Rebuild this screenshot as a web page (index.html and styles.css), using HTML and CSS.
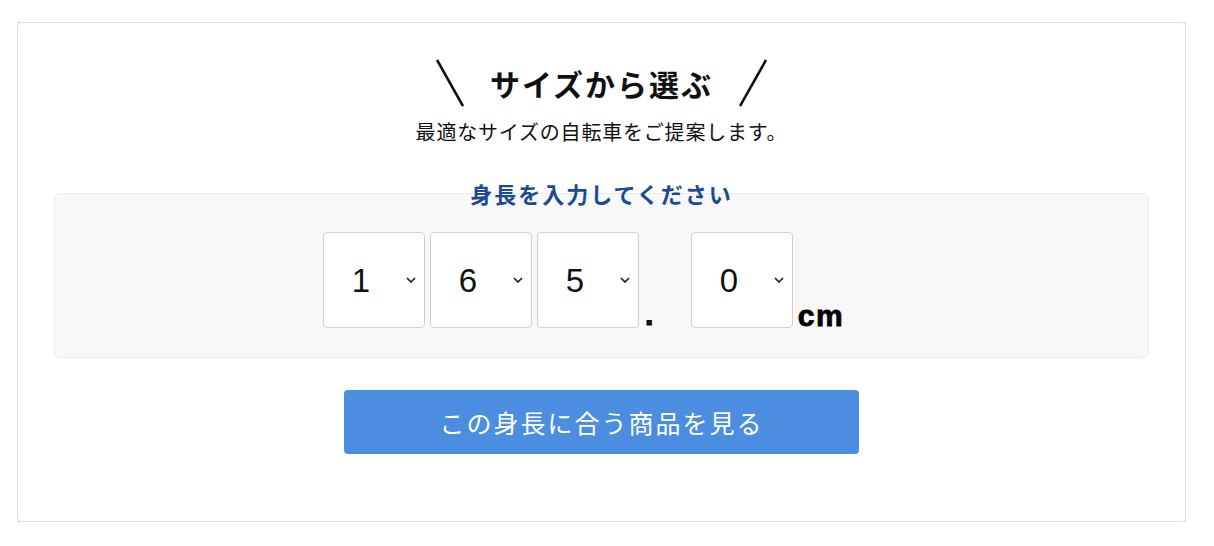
FILE: index.html
```html
<!DOCTYPE html>
<html lang="ja">
<head>
  <meta charset="UTF-8" />
  <title>サイズから選ぶ</title>
  <link rel="stylesheet" href="styles.css">
</head>
<body>
  <div class="card">
    <h2 class="title">
      <svg class="slash" width="28" height="48" viewBox="0 0 28 48"><line x1="1" y1="1" x2="27" y2="47" /></svg>
      <span>サイズから選ぶ</span>
      <svg class="slash" width="28" height="48" viewBox="0 0 28 48"><line x1="27" y1="1" x2="1" y2="47" /></svg>
    </h2>
    <p class="lead">最適なサイズの自転車をご提案します。</p>

    <div class="label">身長を入力してください</div>
    <div class="height-box">
      <div class="height-row">
        <div class="pick">
          <select><option>0</option><option selected>1</option><option>2</option></select>
          <svg class="chev" width="10" height="6" viewBox="0 0 10 6"><polyline points="1,1 5,5 9,1" /></svg>
        </div>
        <div class="pick">
          <select><option>5</option><option selected>6</option><option>7</option></select>
          <svg class="chev" width="10" height="6" viewBox="0 0 10 6"><polyline points="1,1 5,5 9,1" /></svg>
        </div>
        <div class="pick">
          <select><option>4</option><option selected>5</option><option>6</option></select>
          <svg class="chev" width="10" height="6" viewBox="0 0 10 6"><polyline points="1,1 5,5 9,1" /></svg>
        </div>
        <span class="dot">.</span>
        <div class="pick">
          <select><option selected>0</option><option>5</option></select>
          <svg class="chev" width="10" height="6" viewBox="0 0 10 6"><polyline points="1,1 5,5 9,1" /></svg>
        </div>
        <span class="unit">cm</span>
      </div>
    </div>

    <button class="go">この身長に合う商品を見る</button>
  </div>
</body>
</html>
```

FILE: styles.css
```css
body {
  margin: 22px 28px 0 17px;
  font-family: "Noto Sans CJK JP", "Noto Sans", sans-serif;
  color: #111;
  background: #fff;
}
.card {
  background: #fff;
  border: 1px solid #e2e2e2;
  border-radius: 4px;
  box-shadow: 0 0 6px 1px rgba(0, 0, 0, 0.28);
  padding: 37px 36px 67px;
  text-align: center;
}
.title {
  display: flex;
  justify-content: center;
  align-items: center;
  gap: 26px;
  margin: 0;
  height: 46px;
  font-size: 30px;
  font-weight: bold;
  letter-spacing: 2px;
  color: #111;
}
.slash line {
  stroke: #111;
  stroke-width: 2.6;
}
.lead {
  margin: 11px 0 0;
  font-size: 20px;
  line-height: 30px;
  letter-spacing: 0.8px;
}
.label {
  position: relative;
  z-index: 1;
  margin-top: 31px;
  font-size: 22px;
  line-height: 30px;
  font-weight: bold;
  letter-spacing: 2px;
  color: #1b4a91;
}
.height-box {
  margin-top: -15px;
  background: #f8f8f8;
  border: 1px solid #ececec;
  border-radius: 6px;
  padding: 38px 0 29px;
}
.height-row {
  display: flex;
  justify-content: center;
  align-items: flex-end;
  gap: 5px;
  padding-right: 36px;
}
.pick {
  position: relative;
}
.pick select {
  appearance: none;
  -webkit-appearance: none;
  width: 102px;
  height: 96px;
  background: #fff;
  border: 1px solid #cfcfcf;
  border-radius: 4px;
  padding: 0 0 0 28px;
  font-family: "Liberation Sans", Arial, sans-serif;
  font-size: 33px;
  color: #111;
  outline: none;
}
.chev {
  position: absolute;
  right: 9px;
  top: 45px;
}
.chev polyline {
  fill: none;
  stroke: #222;
  stroke-width: 1.7;
}
.dot {
  width: 41px;
  text-align: left;
  padding-left: 1px;
  font-family: "Liberation Sans", Arial, sans-serif;
  font-size: 32px;
  font-weight: bold;
  line-height: 0.8;
  -webkit-text-stroke: 0.8px #000;
}
.unit {
  font-family: "Liberation Sans", Arial, sans-serif;
  font-size: 30px;
  font-weight: bold;
  letter-spacing: 1.5px;
  line-height: 0.8;
  color: #000;
  -webkit-text-stroke: 0.8px #000;
}
.go {
  display: block;
  margin: 32px auto 0;
  width: 515px;
  height: 64px;
  background: #4b8de0;
  color: #fff;
  border: none;
  border-radius: 4px;
  font-family: "Noto Sans CJK JP", "Noto Sans", sans-serif;
  font-size: 25px;
  letter-spacing: 2px;
  cursor: pointer;
}
```
